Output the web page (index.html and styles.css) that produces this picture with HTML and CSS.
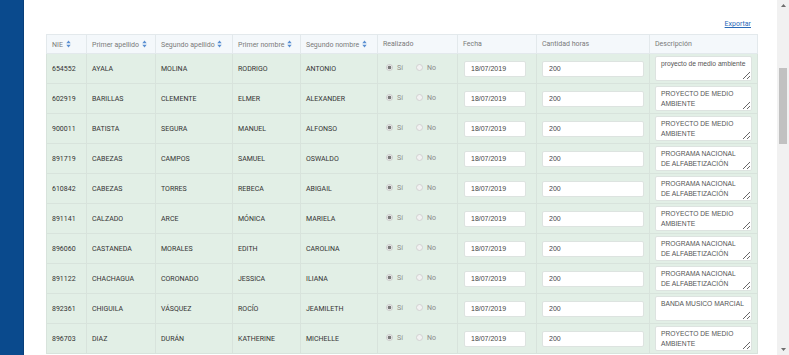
FILE: index.html
```html
<!DOCTYPE html>
<html lang="es">
<head>
<meta charset="utf-8">
<title>Horas sociales</title>
<link rel="stylesheet" href="styles.css">
</head>
<body>
<div class="page">
  <aside class="sidebar"></aside>
  <main class="main">
    <div class="toolbar"><a href="#" class="export">Exportar</a></div>
    <table class="grid">
      <colgroup>
        <col class="c-nie"><col class="c-ap1"><col class="c-ap2"><col class="c-n1"><col class="c-n2"><col class="c-real"><col class="c-date"><col class="c-hours"><col class="c-desc">
      </colgroup>
      <thead>
        <tr>
          <th>NIE <svg class="sort" viewBox="0 0 5 8" width="5" height="8"><path d="M0.3 3.2L2.5 0.6L4.7 3.2Z M0.3 4.8L2.5 7.4L4.7 4.8Z"/></svg></th>
          <th>Primer apellido <svg class="sort" viewBox="0 0 5 8" width="5" height="8"><path d="M0.3 3.2L2.5 0.6L4.7 3.2Z M0.3 4.8L2.5 7.4L4.7 4.8Z"/></svg></th>
          <th>Segundo apellido <svg class="sort" viewBox="0 0 5 8" width="5" height="8"><path d="M0.3 3.2L2.5 0.6L4.7 3.2Z M0.3 4.8L2.5 7.4L4.7 4.8Z"/></svg></th>
          <th>Primer nombre <svg class="sort" viewBox="0 0 5 8" width="5" height="8"><path d="M0.3 3.2L2.5 0.6L4.7 3.2Z M0.3 4.8L2.5 7.4L4.7 4.8Z"/></svg></th>
          <th>Segundo nombre <svg class="sort" viewBox="0 0 5 8" width="5" height="8"><path d="M0.3 3.2L2.5 0.6L4.7 3.2Z M0.3 4.8L2.5 7.4L4.7 4.8Z"/></svg></th>
          <th>Realizado</th>
          <th>Fecha</th>
          <th>Cantidad horas</th>
          <th>Descripción</th>
        </tr>
      </thead>
      <tbody>
        <tr><td>654552</td><td>AYALA</td><td>MOLINA</td><td>RODRIGO</td><td>ANTONIO</td>
          <td><label class="opt"><input type="radio" name="r1" checked>Sí</label><label class="opt"><input type="radio" name="r1">No</label></td>
          <td><input class="field date" type="text" value="18/07/2019"></td><td><input class="field hours" type="text" value="200"></td>
          <td><textarea class="desc" readonly>proyecto de medio ambiente</textarea></td></tr>
        <tr><td>602919</td><td>BARILLAS</td><td>CLEMENTE</td><td>ELMER</td><td>ALEXANDER</td>
          <td><label class="opt"><input type="radio" name="r2" checked>Sí</label><label class="opt"><input type="radio" name="r2">No</label></td>
          <td><input class="field date" type="text" value="18/07/2019"></td><td><input class="field hours" type="text" value="200"></td>
          <td><textarea class="desc" readonly>PROYECTO DE MEDIO AMBIENTE</textarea></td></tr>
        <tr><td>900011</td><td>BATISTA</td><td>SEGURA</td><td>MANUEL</td><td>ALFONSO</td>
          <td><label class="opt"><input type="radio" name="r3" checked>Sí</label><label class="opt"><input type="radio" name="r3">No</label></td>
          <td><input class="field date" type="text" value="18/07/2019"></td><td><input class="field hours" type="text" value="200"></td>
          <td><textarea class="desc" readonly>PROYECTO DE MEDIO AMBIENTE</textarea></td></tr>
        <tr><td>891719</td><td>CABEZAS</td><td>CAMPOS</td><td>SAMUEL</td><td>OSWALDO</td>
          <td><label class="opt"><input type="radio" name="r4" checked>Sí</label><label class="opt"><input type="radio" name="r4">No</label></td>
          <td><input class="field date" type="text" value="18/07/2019"></td><td><input class="field hours" type="text" value="200"></td>
          <td><textarea class="desc" readonly>PROGRAMA NACIONAL DE ALFABETIZACIÓN</textarea></td></tr>
        <tr><td>610842</td><td>CABEZAS</td><td>TORRES</td><td>REBECA</td><td>ABIGAIL</td>
          <td><label class="opt"><input type="radio" name="r5" checked>Sí</label><label class="opt"><input type="radio" name="r5">No</label></td>
          <td><input class="field date" type="text" value="18/07/2019"></td><td><input class="field hours" type="text" value="200"></td>
          <td><textarea class="desc" readonly>PROGRAMA NACIONAL DE ALFABETIZACIÓN</textarea></td></tr>
        <tr><td>891141</td><td>CALZADO</td><td>ARCE</td><td>MÓNICA</td><td>MARIELA</td>
          <td><label class="opt"><input type="radio" name="r6" checked>Sí</label><label class="opt"><input type="radio" name="r6">No</label></td>
          <td><input class="field date" type="text" value="18/07/2019"></td><td><input class="field hours" type="text" value="200"></td>
          <td><textarea class="desc" readonly>PROYECTO DE MEDIO AMBIENTE</textarea></td></tr>
        <tr><td>896060</td><td>CASTANEDA</td><td>MORALES</td><td>EDITH</td><td>CAROLINA</td>
          <td><label class="opt"><input type="radio" name="r7" checked>Sí</label><label class="opt"><input type="radio" name="r7">No</label></td>
          <td><input class="field date" type="text" value="18/07/2019"></td><td><input class="field hours" type="text" value="200"></td>
          <td><textarea class="desc" readonly>PROGRAMA NACIONAL DE ALFABETIZACIÓN</textarea></td></tr>
        <tr><td>891122</td><td>CHACHAGUA</td><td>CORONADO</td><td>JESSICA</td><td>ILIANA</td>
          <td><label class="opt"><input type="radio" name="r8" checked>Sí</label><label class="opt"><input type="radio" name="r8">No</label></td>
          <td><input class="field date" type="text" value="18/07/2019"></td><td><input class="field hours" type="text" value="200"></td>
          <td><textarea class="desc" readonly>PROGRAMA NACIONAL DE ALFABETIZACIÓN</textarea></td></tr>
        <tr><td>892361</td><td>CHIGUILA</td><td>VÁSQUEZ</td><td>ROCÍO</td><td>JEAMILETH</td>
          <td><label class="opt"><input type="radio" name="r9" checked>Sí</label><label class="opt"><input type="radio" name="r9">No</label></td>
          <td><input class="field date" type="text" value="18/07/2019"></td><td><input class="field hours" type="text" value="200"></td>
          <td><textarea class="desc" readonly>BANDA MUSICO MARCIAL</textarea></td></tr>
        <tr><td>896703</td><td>DIAZ</td><td>DURÁN</td><td>KATHERINE</td><td>MICHELLE</td>
          <td><label class="opt"><input type="radio" name="r10" checked>Sí</label><label class="opt"><input type="radio" name="r10">No</label></td>
          <td><input class="field date" type="text" value="18/07/2019"></td><td><input class="field hours" type="text" value="200"></td>
          <td><textarea class="desc" readonly>PROYECTO DE MEDIO AMBIENTE</textarea></td></tr>
      </tbody>
    </table>
  </main>
  <div class="vscroll" aria-hidden="true">
    <div class="vs-btn"><svg viewBox="0 0 5 3" width="5" height="3"><path d="M0 3L2.5 0L5 3Z"/></svg></div>
    <div class="vs-track">
      <div class="vs-thumb"></div>
    </div>
    <div class="vs-btn"><svg viewBox="0 0 5 3" width="5" height="3"><path d="M0 0L2.5 3L5 0Z"/></svg></div>
  </div>
</div>
</body>
</html>
```

FILE: styles.css
```css
html, body {
  margin: 0;
  padding: 0;
  background: #ffffff;
  overflow: hidden;
}
body {
  font-family: Roboto, "Liberation Sans", Arial, sans-serif;
  font-size: 7px;
  color: #333;
}
.page {
  display: flex;
  height: 100vh;
  overflow: hidden;
}
.sidebar {
  flex: 0 0 24px;
  background: #0a4a8d;
  border-right: 1px solid #083f7a;
  box-sizing: border-box;
}
.main {
  flex: 1;
  min-width: 0;
  overflow: hidden;
  padding: 19px 20px 0 22px;
}
.toolbar {
  display: flex;
  justify-content: flex-end;
  padding-right: 6px;
  line-height: 10px;
  margin-bottom: 5px;
}
.export {
  color: #2a6ab8;
  text-decoration: underline;
  font-size: 7px;
}

/* fake browser scrollbar */
.vscroll {
  flex: 0 0 12px;
  display: flex;
  flex-direction: column;
  background: #f1f1f1;
}
.vs-btn {
  height: 11px;
  display: flex;
  align-items: center;
  justify-content: center;
  fill: #6e6e6e;
}
.vs-track {
  flex: 1;
  padding: 57px 2px 0 2px;
}
.vs-thumb {
  height: 76px;
  background: #c1c1c1;
}

/* table */
.grid {
  width: 711px;
  table-layout: fixed;
  border-collapse: collapse;
  border: 1px solid #dfe5e2;
}
.c-nie { width: 40px; }
.c-ap1 { width: 69px; }
.c-ap2 { width: 77px; }
.c-n1 { width: 68px; }
.c-n2 { width: 77px; }
.c-real { width: 80px; }
.c-date { width: 79px; }
.c-hours { width: 113px; }
.c-desc { width: 108px; }
.grid th,
.grid td {
  border: 1px solid #d8e3dc;
  text-align: left;
  vertical-align: middle;
  white-space: nowrap;
  overflow: hidden;
}
.grid th {
  background: #f4f8fb;
  color: #7a7a7a;
  font-weight: 400;
  height: 18px;
  padding: 0 5px;
  border-color: #e3e9ec;
}
.grid td {
  background: #e2efe6;
  height: 29px;
  padding: 0 5px;
  color: #333;
}
.sort {
  fill: #5a8fd2;
  vertical-align: -1px;
  margin-left: 1px;
}
.opt {
  display: inline-flex;
  align-items: center;
  color: #8a8a8a;
  margin-left: 3px;
  margin-right: 10px;
}
.opt input {
  -webkit-appearance: none;
  appearance: none;
  width: 7px;
  height: 7px;
  margin: 0 4px 0 0;
  border-radius: 50%;
  border: 1px solid #d2d2d2;
  background: #f2f2f2;
  box-sizing: border-box;
}
.opt input:checked {
  background: radial-gradient(circle, #7a7a7a 0 1.6px, #f0f0f0 2.1px);
  border-color: #c9c9c9;
}
.field {
  display: block;
  box-sizing: border-box;
  height: 16px;
  border: 1px solid #dde3e0;
  border-radius: 2px;
  background: #fff;
  font-family: "Liberation Sans", Arial, sans-serif;
  font-size: 7px;
  color: #444;
  padding: 0 6px;
  margin: 0;
}
.date {
  width: 62px;
  margin-left: 1px;
}
.hours {
  width: 102px;
}
.desc {
  display: block;
  box-sizing: border-box;
  width: 97px;
  height: 25px;
  margin: 0;
  padding: 2px 5px;
  border: 1px solid #dde3e0;
  border-radius: 2px;
  background: #fff;
  font-family: "Liberation Sans", Arial, sans-serif;
  font-size: 6.7px;
  line-height: 10px;
  color: #555;
  overflow: hidden;
  resize: both;
  white-space: normal;
}
```
